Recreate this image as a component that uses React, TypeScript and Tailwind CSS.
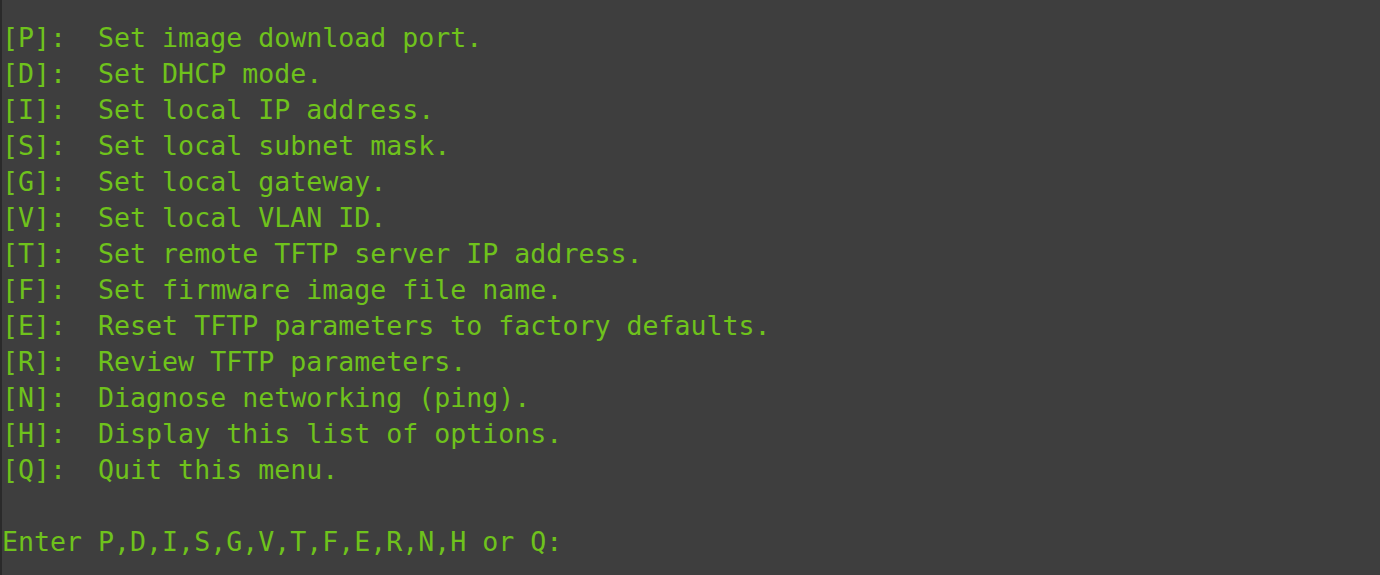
const lines = [
  "[P]:  Set image download port.",
  "[D]:  Set DHCP mode.",
  "[I]:  Set local IP address.",
  "[S]:  Set local subnet mask.",
  "[G]:  Set local gateway.",
  "[V]:  Set local VLAN ID.",
  "[T]:  Set remote TFTP server IP address.",
  "[F]:  Set firmware image file name.",
  "[E]:  Reset TFTP parameters to factory defaults.",
  "[R]:  Review TFTP parameters.",
  "[N]:  Diagnose networking (ping).",
  "[H]:  Display this list of options.",
  "[Q]:  Quit this menu.",
  "",
  "Enter P,D,I,S,G,V,T,F,E,R,N,H or Q:",
];

export default function App() {
  return (
    <div className="flex h-[575px] w-[1380px] overflow-hidden bg-[#3e3e3e]">
      <div className="w-[2px] shrink-0 bg-[#2a2a2a]" />
      <div
        className="flex flex-col pt-[20px] text-[26.6px] leading-[36px] text-[#6fc21c] whitespace-pre"
        style={{ fontFamily: '"DejaVu Sans Mono", "Liberation Mono", monospace' }}
      >
        {lines.map((l, i) => (
          <div key={i} className="h-[36px]">
            {l}
          </div>
        ))}
      </div>
    </div>
  );
}
